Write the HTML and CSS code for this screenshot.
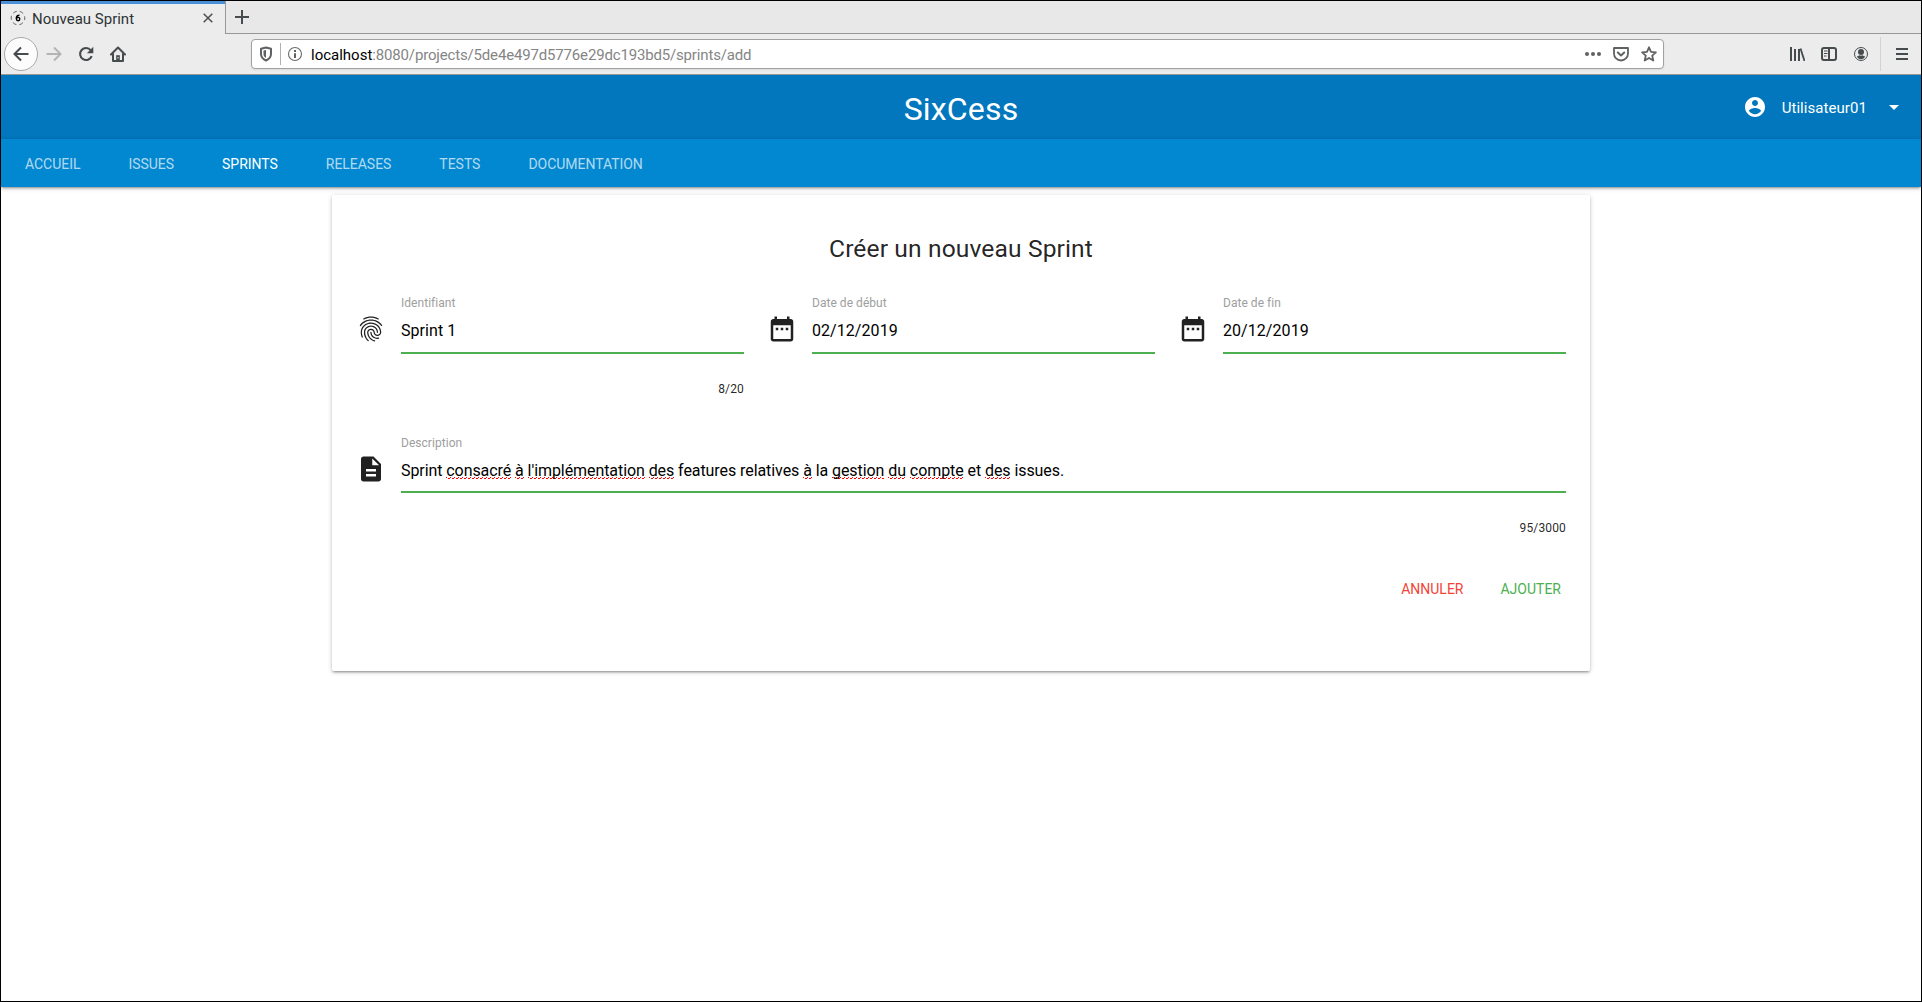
FILE: index.html
```html
<!DOCTYPE html>
<html lang="fr">
<head>
<meta charset="utf-8">
<title>Nouveau Sprint</title>
<link rel="stylesheet" href="styles.css">
</head>
<body>
<div class="window">
  <div class="tabstrip">
    <div class="tab">
      <svg class="favicon" width="16" height="16" viewBox="0 0 16 16"><circle cx="8" cy="8" r="6.800" fill="none" stroke="#666" stroke-width="1" stroke-dasharray="4.100 3.020" stroke-dashoffset="2"/><path d="M9.500 5.300C7.500 5.300 6.300 6.700 6.300 8.700" fill="none" stroke="#000" stroke-width="1.500"/><circle cx="8.100" cy="9.100" r="1.700" fill="none" stroke="#000" stroke-width="1.400"/></svg>
      <span class="tab-title">Nouveau Sprint</span>
      <svg class="tab-close" width="10" height="10" viewBox="0 0 10 10"><path d="M.7.700 9.300 9.300M9.300.700.700 9.300" stroke="#4a4f50" stroke-width="1.500"/></svg>
    </div>
    <div class="newtab"><svg width="14" height="14" viewBox="0 0 14 14"><path d="M7 0v14M0 7h14" stroke="#464b4d" stroke-width="2"/></svg></div>
  </div>
  <div class="toolbar">
    <div class="back"><svg width="16" height="16" viewBox="0 0 16 16"><path d="M15.500 8H1.500M8 1.500 1.500 8 8 14.500" fill="none" stroke="#464b4d" stroke-width="2"/></svg></div>
    <svg class="forward" width="16" height="16" viewBox="0 0 16 16"><path d="M.500 8h14M8 1.500 14.500 8 8 14.500" fill="none" stroke="#b3b5b5" stroke-width="2"/></svg>
    <svg class="reload" width="16" height="16" viewBox="0 0 16 16"><path d="M12.800 4.300A6 6 0 1 0 13.700 10.200" fill="none" stroke="#464b4d" stroke-width="2.100"/><path d="M15.300.800v6.400H8.900z" fill="#464b4d"/></svg>
    <svg class="home" width="16" height="16" viewBox="0 0 16 16"><path d="M1 8.500 8 1.500l7 7M3 8v7h10V8" fill="none" stroke="#464b4d" stroke-width="2" stroke-linejoin="round" stroke-linecap="round"/><path d="M6.200 15V9.200h3.600V15z" fill="#464b4d"/><path d="M8 11v1.500" stroke="#ececec"/></svg>
    <div class="urlbar">
      <svg width="14" height="16" viewBox="0 0 14 16"><path d="M2 2.700 7 1.500l5 1.200V8c0 3-2 5.200-5 6.500C4 13.200 2 11 2 8z" fill="none" stroke="#5f6163" stroke-width="2" stroke-linejoin="round"/><path d="M7 4v8C5.200 10.800 4.500 9.800 4.500 8V4.500z" fill="#5f6163"/></svg>
      <span class="url-sep"></span>
      <svg width="16" height="16" viewBox="0 0 16 16"><circle cx="8" cy="8" r="6.500" fill="none" stroke="#6a6c6e" stroke-width="1.100"/><path d="M8 4v2M8 7.200V12" stroke="#5f6163" stroke-width="2"/></svg>
      <span class="url"><b>localhost</b>:8080/projects/5de4e497d5776e29dc193bd5/sprints/add</span>
      <div class="url-actions">
        <svg width="16" height="16" viewBox="0 0 16 16" fill="#5f6163"><circle cx="2" cy="8" r="2"/><circle cx="8" cy="8" r="2"/><circle cx="14" cy="8" r="2"/></svg>
        <svg width="16" height="16" viewBox="0 0 16 16" fill="none" stroke="#5f6163" stroke-width="1.800" stroke-linejoin="round"><path d="M1 2h14v5.500a7 7 0 0 1-14 0z"/><path d="m4.800 6.500 3.200 3 3.200-3" stroke-width="2" stroke-linecap="round"/></svg>
        <svg width="16" height="16" viewBox="0 0 16 16"><path d="m8 1.300 2 4.500 4.900.5-3.700 3.300 1.100 4.900L8 12l-4.300 2.500 1.100-4.900L1.100 6.300 6 5.800z" fill="none" stroke="#5f6163" stroke-width="1.800" stroke-linejoin="round"/></svg>
      </div>
    </div>
    <div class="tools">
      <svg width="16" height="16" viewBox="0 0 16 16" stroke="#464b4d" stroke-width="2"><path d="M2 1v14M6 3v12M10 3v12" /><path d="m11.500 2.500 4 12.500" stroke-width="1.800"/></svg>
      <svg width="16" height="16" viewBox="0 0 16 16" fill="none" stroke="#464b4d" stroke-width="2"><rect x="1" y="2" width="14" height="12" rx="2"/><path d="M8 2v12"/><path d="M3 5h3.500M3 7.500h3.500M3 10h2.500" stroke-width="1"/></svg>
      <svg width="16" height="16" viewBox="0 0 16 16"><circle cx="8" cy="8" r="6.500" fill="none" stroke="#464b4d" stroke-width="1"/><circle cx="8" cy="6" r="3" fill="#464b4d"/><path d="M3.800 10.300c1.300 0 2-.5 2.700-1 .9.500 2.100.5 3 0 .7.500 1.400 1 2.700 1-.8 2-2.300 3-4.200 3s-3.400-1-4.200-3z" fill="#464b4d"/></svg>
      <span class="tools-sep"></span>
      <svg class="menu" width="12" height="12" viewBox="0 0 12 12"><path d="M0 1h12M0 6h12M0 11h12" stroke="#464b4d" stroke-width="2"/></svg>
    </div>
  </div>
  <header class="header">
    <span class="brand">SixCess</span>
    <div class="user">
      <svg width="24" height="24" viewBox="0 0 24 24"><path fill="#fff" d="M12 2C6.480 2 2 6.480 2 12s4.480 10 10 10 10-4.480 10-10S17.520 2 12 2zm0 3c1.660 0 3 1.340 3 3s-1.340 3-3 3-3-1.340-3-3 1.340-3 3-3zm0 14.200c-2.500 0-4.710-1.280-6-3.220.03-1.990 4-3.080 6-3.080 1.990 0 5.970 1.090 6 3.080-1.290 1.940-3.500 3.220-6 3.220z"/></svg>
      <span class="username">Utilisateur01</span>
      <svg width="24" height="24" viewBox="0 0 24 24"><path fill="#fff" d="m7 10 5 5 5-5z"/></svg>
    </div>
  </header>
  <nav class="nav">
    <a>ACCUEIL</a><a>ISSUES</a><a class="active">SPRINTS</a><a>RELEASES</a><a>TESTS</a><a>DOCUMENTATION</a>
  </nav>
  <main class="card">
    <h1>Créer un nouveau Sprint</h1>
    <div class="fields">
      <div class="field">
        <svg viewBox="0 0 24 24"><path d="M17.810 4.470c-.08 0-.16-.02-.23-.06C15.660 3.420 14 3 12.010 3c-1.980 0-3.860.47-5.570 1.410-.24.130-.54.040-.68-.2-.13-.24-.04-.55.200-.68C7.820 2.520 9.860 2 12.010 2c2.130 0 3.990.47 6.030 1.520.25.130.34.430.21.670-.09.180-.26.280-.44.280zM3.500 9.720c-.1 0-.2-.03-.29-.09-.23-.16-.28-.47-.12-.7.990-1.400 2.250-2.500 3.750-3.270C9.980 4.040 14 4.030 17.150 5.650c1.500.770 2.760 1.860 3.750 3.250.16.220.11.540-.12.700-.23.160-.54.110-.7-.12-.9-1.260-2.040-2.250-3.390-2.940-2.870-1.470-6.540-1.470-9.400.010-1.360.7-2.500 1.700-3.400 2.960-.08.140-.23.210-.39.210zm6.250 12.070c-.13 0-.26-.05-.35-.15-.87-.87-1.340-1.430-2.010-2.640-.69-1.230-1.050-2.730-1.050-4.340 0-2.970 2.540-5.390 5.660-5.390s5.660 2.420 5.660 5.390c0 .28-.22.500-.5.500s-.5-.22-.5-.5c0-2.420-2.090-4.390-4.660-4.390-2.570 0-4.660 1.970-4.660 4.390 0 1.440.32 2.770.93 3.850.64 1.150 1.080 1.640 1.850 2.420.19.200.19.510 0 .71-.11.100-.24.150-.37.150zm7.170-1.850c-1.190 0-2.240-.3-3.100-.89-1.490-1.010-2.380-2.650-2.380-4.390 0-.28.220-.5.500-.5s.5.220.5.500c0 1.410.72 2.740 1.940 3.560.71.480 1.540.71 2.540.71.240 0 .64-.03 1.040-.1.270-.05.530.13.580.41.050.27-.13.530-.41.580-.57.110-1.070.12-1.210.12zM14.910 22c-.04 0-.09-.01-.13-.02-1.590-.44-2.630-1.030-3.720-2.100-1.400-1.390-2.170-3.240-2.170-5.220 0-1.620 1.380-2.940 3.080-2.940 1.700 0 3.080 1.320 3.080 2.940 0 1.070.93 1.940 2.080 1.940s2.080-.87 2.080-1.940c0-3.770-3.250-6.830-7.250-6.830-2.840 0-5.440 1.580-6.610 4.030-.39.810-.59 1.760-.59 2.800 0 .78.070 2.010.67 3.610.1.260-.03.550-.29.640-.26.100-.55-.04-.64-.29-.49-1.310-.73-2.610-.73-3.960 0-1.200.23-2.290.68-3.240 1.330-2.790 4.280-4.600 7.510-4.600 4.550 0 8.250 3.510 8.250 7.830 0 1.620-1.380 2.940-3.080 2.940s-3.080-1.320-3.080-2.940c0-1.070-.93-1.940-2.080-1.940s-2.080.87-2.080 1.940c0 1.710.66 3.310 1.870 4.510.95.940 1.860 1.460 3.270 1.850.27.070.42.350.35.610-.05.230-.26.380-.47.380z"/></svg>
        <div class="control"><label>Identifiant</label><div class="input">Sprint 1</div><span class="counter">8/20</span></div>
      </div>
      <div class="field">
        <svg viewBox="0 0 24 24"><path d="M9 11H7v2h2v-2zm4 0h-2v2h2v-2zm4 0h-2v2h2v-2zm2-7h-1V2h-2v2H8V2H6v2H5c-1.110 0-1.990.9-1.990 2L3 20c0 1.100.89 2 2 2h14c1.100 0 2-.9 2-2V6c0-1.100-.9-2-2-2zm0 16H5V9h14v11z"/></svg>
        <div class="control"><label>Date de début</label><div class="input">02/12/2019</div></div>
      </div>
      <div class="field">
        <svg viewBox="0 0 24 24"><path d="M9 11H7v2h2v-2zm4 0h-2v2h2v-2zm4 0h-2v2h2v-2zm2-7h-1V2h-2v2H8V2H6v2H5c-1.110 0-1.990.9-1.990 2L3 20c0 1.100.89 2 2 2h14c1.100 0 2-.9 2-2V6c0-1.100-.9-2-2-2zm0 16H5V9h14v11z"/></svg>
        <div class="control"><label>Date de fin</label><div class="input">20/12/2019</div></div>
      </div>
    </div>
    <div class="field description">
      <svg viewBox="0 0 24 24"><path d="M14 2H6c-1.100 0-1.990.9-1.990 2L4 20c0 1.100.89 2 1.990 2H18c1.100 0 2-.9 2-2V8l-6-6zm2 16H8v-2h8v2zm0-4H8v-2h8v2zm-3-5V3.500L18.500 9H13z"/></svg>
      <div class="control"><label>Description</label><div class="input">Sprint <u>consacré</u> <u>à</u> <u>l'implémentation</u> <u>des</u> features relatives <u>à</u> la <u>gestion</u> <u>du</u> <u>compte</u> et <u>des</u> issues.</div><span class="counter">95/3000</span></div>
    </div>
    <div class="actions"><a class="cancel">ANNULER</a><a class="add">AJOUTER</a></div>
  </main>
</div>
</body>
</html>
```
FILE: styles.css
```css
* { box-sizing: border-box; }
body { margin: 0; font-family: Roboto, sans-serif; color: rgba(0,0,0,.87); background: #fff; }
svg { display: block; flex: none; }
.window { width: 1922px; height: 1002px; border: 1px solid #000; overflow: hidden; background: #fff; }

.tabstrip { display: flex; height: 33px; background: #e8e8e8; }
.tab { display: flex; align-items: center; width: 224px; height: 33px; padding: 0 12px 2px 9px; background: #ececec; border-top: 3px solid #4a90d9; }
.tab-title { flex: 1; margin: 2px 0 0 6px; font-size: 15px; line-height: 18px; color: #2e3436; }
.newtab { flex: 1; padding: 9px 0 0 9px; border-left: 1px solid #979797; border-bottom: 1px solid #979797; }

.toolbar { display: flex; align-items: center; height: 41px; padding: 0 13px 0 3px; background: #ececec; border-bottom: 1px solid #979797; }
.back { display: flex; align-items: center; justify-content: center; width: 34px; height: 34px; border: 1px solid #aaa; border-radius: 50%; background: #fcfcfc; }
.forward { margin-left: 8px; }
.reload { margin-left: 16px; }
.home { margin-left: 16px; }
.urlbar { display: flex; align-items: center; width: 1413px; height: 30px; margin-left: 125px; padding: 0 6px 0 7px; background: #fff; border: 1px solid #a0a0a0; border-radius: 4px; box-shadow: 0 1px 2px rgba(0,0,0,.08); }
.url-sep { width: 1px; height: 22px; margin: 0 6px 0 7px; background: #b0b0b0; }
.url { margin: 2px 0 0 8px; font-size: 15px; line-height: 18px; letter-spacing: -.165px; color: #858585; white-space: nowrap; }
.url b { font-weight: 400; letter-spacing: 0; color: #000; }
.url-actions { display: flex; gap: 12px; margin-left: auto; }
.tools { display: flex; align-items: center; gap: 16px; margin-left: auto; }
.tools-sep { width: 1px; height: 34px; margin: 0 -1px 0 -5px; background: #d2d2d2; }

.header { display: grid; grid-template-columns: 1fr auto 1fr; align-items: center; height: 64px; background: #0277bd; color: #fff; }
.brand { grid-column: 2; margin-top: 4px; font-size: 32px; line-height: 40px; letter-spacing: .18px; }
.user { display: flex; align-items: center; justify-self: end; padding-right: 15px; }
.username { margin: 2px 15px 0; font-size: 15px; line-height: 20px; letter-spacing: .06px; }
.nav { display: flex; height: 48px; background: #0288d1; box-shadow: 0 2px 2px 0 rgba(0,0,0,.14), 0 3px 1px -2px rgba(0,0,0,.12), 0 1px 5px 0 rgba(0,0,0,.2); }
.nav a { padding: 0 24px; font-size: 14px; line-height: 51px; letter-spacing: -.03px; color: rgba(255,255,255,.7); }
.nav .active { color: #fff; }

.card { width: 1258px; height: 476px; margin: 8px auto 0; padding: 32px 24px 0; background: #fff; border-radius: 2px; box-shadow: 0 2px 2px 0 rgba(0,0,0,.14), 0 3px 1px -2px rgba(0,0,0,.12), 0 1px 5px 0 rgba(0,0,0,.2); }
.card h1 { margin: 0; text-align: center; font-size: 24.6px; font-weight: 400; line-height: 44px; letter-spacing: .12px; }
.fields { display: grid; grid-template-columns: repeat(3, 388px); gap: 23px; margin-top: 29px; }
.field { display: flex; height: 98px; }
.field > svg { width: 30px; height: 30px; margin-top: 14px; fill: #212121; }
.control { flex: 1; margin-left: 15px; display: flex; flex-direction: column; }
.control > * { flex-shrink: 0; }
.control label { height: 16px; margin-top: -5px; font-size: 12px; line-height: 16px; letter-spacing: .04px; color: #9e9e9e; }
.input { height: 43px; padding-top: 8px; border-bottom: 2px solid #4caf50; font-size: 16px; line-height: 24px; letter-spacing: .06px; color: #000; }
.counter { margin-top: 26px; align-self: flex-end; font-size: 12px; line-height: 18px; letter-spacing: .15px; }
.description { margin-top: 42px; }
.description .input { height: 42px; letter-spacing: -.075px; }
/* Spell-checker squiggle: two staggered rows of red dots */
.input u {
  text-decoration: none;
  background:
    repeating-linear-gradient(90deg, #f00 0 1px, transparent 1px 4px) 0 calc(100% - 2px) / 100% 1px no-repeat,
    repeating-linear-gradient(90deg, transparent 0 2px, #f00 2px 4px) 0 calc(100% - 1px) / 100% 1px no-repeat;
}
.actions { display: flex; justify-content: flex-end; gap: 37px; margin-top: 33px; padding-right: 5px; font-size: 14px; line-height: 36px; }
.cancel { color: #f44336; }
.add { color: #4caf50; }
```
